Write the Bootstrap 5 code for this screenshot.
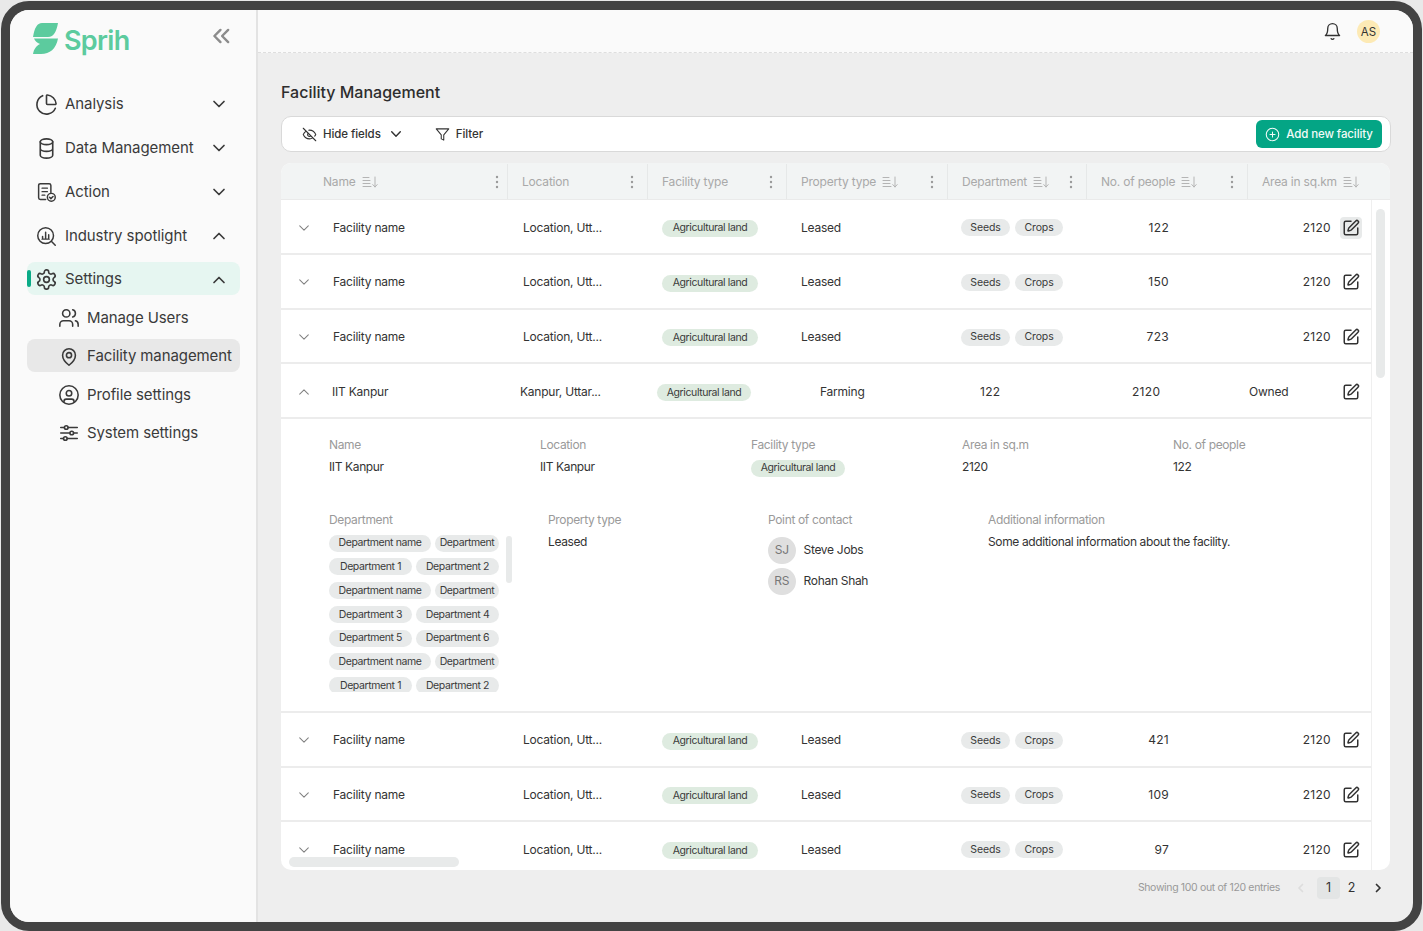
<!DOCTYPE html>
<html lang="en">
<head>
<meta charset="utf-8">
<title>Facility Management</title>
<link href="https://cdn.jsdelivr.net/npm/bootstrap@5.3.0/dist/css/bootstrap.min.css" rel="stylesheet">
<style>
html,body{height:100%;margin:0}
body{background:#e9e9e9;padding:1px 1px 0;font-family:Inter,"Liberation Sans",sans-serif;color:#333;overflow:hidden}
.ico{fill:none;stroke:currentColor;stroke-width:1.7;stroke-linecap:round;stroke-linejoin:round;flex:none}
.device{height:930px;border:9px solid #434343;border-radius:28px;overflow:hidden;background:#eee}
.side{width:248px;flex:none;background:#fafafa;border-right:2px solid #e3e3e3}
.brand{height:77.5px;padding:13px 0 0 23px;position:relative}
.brand-name{color:#5ccb9e;font-size:27px;font-weight:600;letter-spacing:-.7px;line-height:32px;margin:2px 0 0 6px}
.collapse-btn{color:#8c8c8c;margin:2px 0 0 80px;stroke-width:2.2}
.side-item{height:33px;margin:0 16px 11px 17px;padding:0 14px 0 8px;border-radius:8px;font-size:15px;gap:7px;color:#3a3a3a;position:relative;text-decoration:none;letter-spacing:-.08px}
.side-item .lbl{flex:1}
.side-item .ic-sm{margin:0 1px}
.side-item.pre-on{margin-bottom:9.5px}
.side-item.on{background:#e6f6f1;margin-bottom:6.5px;padding-top:2px}
.side-item.on::before{content:"";position:absolute;left:0;top:8px;width:4px;height:17px;border-radius:2px;background:#0bab87}
.sub-item{height:33px;margin:0 16px 4.5px 17px;padding:0 0 0 31px;border-radius:8px;font-size:15px;gap:7px;color:#3a3a3a;text-decoration:none;letter-spacing:-.1px}
.sub-item.cur{background:#e8e8e8;margin-bottom:6.4px;padding-top:2px}
.sub-item.tail{margin-bottom:5px}
.topbar{height:43px;flex:none;background:#fafafa;border-bottom:1.5px dashed #dedede;padding-right:33px;gap:15px}
.ava{width:23px;height:23px;border-radius:50%;background:#fdeab5;font-size:11.5px;color:#333;margin-top:1px;padding-top:2px}
.page-body{padding:27px 22px 0 23px}
.page-title{font-size:16px;font-weight:500;line-height:24px;margin:0 0 12px;color:#2d2d2d}
.toolbar{height:36px;background:#fff;border:1px solid #d9d9d9;border-radius:10px;padding:0 8px 0 20px}
.tool{font-size:11.5px;font-weight:500;color:#333;gap:6px;letter-spacing:-.08px}
.tool span{padding-top:1px}
.tool-hide .ico:last-child{margin-left:3px}
.tool-filter{margin:0 auto 0 33px}
.add-btn{background:#04a585;color:#f2fbf8;border:0;border-radius:6px;height:28px;width:126px;font-size:11.5px;font-weight:500;gap:6px;padding:1px 0 0;letter-spacing:-.1px}
.grid-wrap{height:707px;margin:11px 1px 0 0;background:#fff;border-radius:10px;overflow:hidden;position:relative}
.grid-head{height:37px;background:#f2f4f4;border-bottom:1px solid #eaeaea;font-size:12px;color:#a9a9a9;letter-spacing:-.2px;padding-top:1px}
.hc{height:100%;padding-left:14px;border-right:1px solid #e6e8e8;gap:6px}
.hc .ico{stroke-width:1;color:#b4b4b4}
.hc .kb{margin-left:auto;margin-right:13px;color:#9a9a9a}
.hc1{width:227px;padding-left:42px}.hc1 .kb{margin-right:8px}
.hc2{width:140px}.hc3{width:139px}.hc4{width:161px}.hc5{width:139px}.hc6{width:161px}.hc7{width:142px;border-right:0}
.grid-body{width:1091px;border-right:1px solid #efefef;height:670px;overflow:hidden;font-size:12px;letter-spacing:-.22px;color:#333}
.gr{height:54.75px;border-bottom:2px solid #ececec;padding-top:2.5px}
.tg{width:52px;padding-left:17px;color:#808080}
.tg .ico{stroke-width:1.2}
.c-name{width:190px}.c-loc{width:139px}.c-type{width:139px}.c-prop{width:160px}.c-dept{width:127px;gap:5px}.c-ppl{width:81px;text-align:right}.c-area{width:162px;text-align:right}
.c-edit{width:40px;padding-left:9px}
.c-ppl,.c-area,.x-ppl,.x-area{letter-spacing:.3px}
.edit-box{width:22px;height:22px;border-radius:4px;color:#333}
.edit-box .ico{stroke-width:2}
.edit-box.hl{background:#e8eaea}
.x-tg{width:51px}.x-name{width:188px}.x-loc{width:137px}.x-type{width:163px}.x-prop{width:160px}.x-ppl{width:152px}.x-area{width:117px}.x-own{width:82px}
.chip{display:inline-flex;align-items:center;justify-content:center;height:17px;border-radius:9px;font-size:10.5px;letter-spacing:-.4px;white-space:nowrap;color:#3a3a3a;background:#e8eaea}
.chip.land{background:#deebe0;width:96px}
.x-type .chip.land{width:94px}
.val .chip.land{width:94px}
.chip.s{width:49px;letter-spacing:-.1px}.chip.cr{width:48px;letter-spacing:-.1px}
.detail{height:293.75px;border-bottom:2px solid #ececec;padding:18px 0 0 48px;position:relative}
.lab{font-size:12px;color:#9a9a9a;line-height:16px;letter-spacing:-.35px}
.val{font-size:12px;color:#333;line-height:16px;margin-top:6px;letter-spacing:-.37px}
.d1{width:211px;flex:none}
.d-top{height:67px;margin-bottom:7.5px}
.dept-col{width:219px;flex:none}.prop-col{width:220px;flex:none}.poc-col{width:220px;flex:none}
.dept-scroll{height:157px;width:170px;overflow:hidden;margin-top:7px;gap:6.8px}
.dept-scroll .chip{flex:none}
.dr{gap:4px;flex:none}
.chip.l{width:102px}.chip.m{width:64px}.chip.e{width:83px}
.d-thumb{position:absolute;left:225px;top:117px;width:6px;height:47px;border-radius:3px;background:#e8eaea}
.per{gap:8px;font-size:12px;letter-spacing:-.3px;margin-top:3.500px}
.per-first{margin-top:9px}
.per-ava{width:27.500px;height:27.500px;border-radius:50%;background:#dfdfdf;color:#777;font-size:12px}
.v-track{position:absolute;right:5px;top:46px;width:9px;height:169px;border-radius:5px;background:#e8eaea}
.h-track{position:absolute;left:8px;bottom:3px;width:170px;height:10px;border-radius:5px;background:#e8eaea}
.pager{height:36px;font-size:10.5px;letter-spacing:-.35px;color:#999;padding-right:1px}
.pg{font-size:12.5px;letter-spacing:0;color:#333;width:23px;height:22px;border-radius:4px}
.pg.cur{background:#e3e5e5}
.pg-prev{margin:0 12px 0 17px;color:#ddd}
.pg-next{margin:0 8px 0 11px;color:#333}
</style>
</head>
<body>
<svg width="0" height="0" class="position-absolute">
<defs>
<symbol id="down" viewBox="0 0 14 14"><path d="M2 4.500l5 5 5-5"/></symbol>
<symbol id="up" viewBox="0 0 14 14"><path d="M2 9.500l5-5 5 5"/></symbol>
<symbol id="edit" viewBox="0 0 24 24"><path d="M12 3H5a2 2 0 0 0-2 2v14a2 2 0 0 0 2 2h14a2 2 0 0 0 2-2v-7"/><path d="M18.375 2.625a1 1 0 0 1 3 3l-9.013 9.014a2 2 0 0 1-.853.505l-2.873.84a.5.5 0 0 1-.62-.62l.84-2.873a2 2 0 0 1 .506-.852z"/></symbol>
<symbol id="sort" viewBox="0 0 16 12"><path d="M1 1.500h6M1 4.500h7M1 7.500h7M1 10.500h8M13 1v10M10.800 8.600L13 11l2.200-2.400"/></symbol>
<symbol id="kebab" viewBox="0 0 4 14"><circle cx="2" cy="2" r="1.200" fill="currentColor" stroke="none"/><circle cx="2" cy="7" r="1.200" fill="currentColor" stroke="none"/><circle cx="2" cy="12" r="1.200" fill="currentColor" stroke="none"/></symbol>
</defs>
</svg>
<div class="device d-flex">
  <aside class="side">
    <div class="brand d-flex align-items-start">
      <svg width="25" height="31" viewBox="0 0 25 31" aria-hidden="true"><path fill="#5ccb9e" d="M25 0H9C4 0 1.500 5 0 14h15c6 0 8.500-6 10-14z"/><path fill="#5ccb9e" d="M1 15.500h24C23 26 17 31 8 31H0c1-5 3-8 7-10-3-1-5-3-6-5.500z"/></svg>
      <span class="brand-name">Sprih</span>
      <svg class="ico collapse-btn" width="22" height="22" viewBox="0 0 20 20"><path d="M9.500 4.500L4 10l5.500 5.500M16.500 4.500L11 10l5.500 5.500"/></svg>
    </div>
    <nav class="d-flex flex-column">
      <a class="side-item d-flex align-items-center"><svg class="ico" width="23" height="23" viewBox="0 0 24 24"><path d="M21 12c.552 0 1.005-.449.95-.998a10 10 0 0 0-8.953-8.951c-.55-.055-.998.398-.998.95v8a1 1 0 0 0 1 1z"/><path d="M21.210 15.890A10 10 0 1 1 8 2.830"/></svg><span class="lbl">Analysis</span><svg class="ico" width="14" height="14"><use href="#down"/></svg></a>
      <a class="side-item d-flex align-items-center"><svg class="ico" width="23" height="23" viewBox="0 0 24 24"><ellipse cx="12" cy="5" rx="6.500" ry="3"/><path d="M5.500 5v14a6.500 3 0 0 0 13 0V5M5.500 12a6.500 3 0 0 0 13 0"/></svg><span class="lbl">Data Management</span><svg class="ico" width="14" height="14"><use href="#down"/></svg></a>
      <a class="side-item d-flex align-items-center"><svg class="ico ic-sm" width="21" height="21" viewBox="0 0 24 24"><path d="M11 20H5a2 2 0 0 1-2-2V4a2 2 0 0 1 2-2h10a2 2 0 0 1 2 2v8M7 7h6M7 11h6M7 15h3"/><circle cx="17.500" cy="17.500" r="4.500"/><path d="M15.500 17.500l1.500 1.500 2.500-2.500"/></svg><span class="lbl">Action</span><svg class="ico" width="14" height="14"><use href="#down"/></svg></a>
      <a class="side-item pre-on d-flex align-items-center"><svg class="ico ic-sm" width="21" height="21" viewBox="0 0 24 24"><circle cx="11" cy="11" r="9"/><path d="M17.500 17.500L22 22M7.500 14v-2M11 14V7M14.500 14v-4M7 15h8"/></svg><span class="lbl">Industry spotlight</span><svg class="ico" width="14" height="14"><use href="#up"/></svg></a>
      <a class="side-item on d-flex align-items-center"><svg class="ico" width="23" height="23" viewBox="0 0 24 24"><path d="M12.220 2h-.44a2 2 0 0 0-2 2v.18a2 2 0 0 1-1 1.730l-.43.25a2 2 0 0 1-2 0l-.15-.08a2 2 0 0 0-2.730.73l-.22.38a2 2 0 0 0 .73 2.730l.15.1a2 2 0 0 1 1 1.720v.51a2 2 0 0 1-1 1.740l-.15.09a2 2 0 0 0-.73 2.730l.22.38a2 2 0 0 0 2.730.73l.15-.08a2 2 0 0 1 2 0l.43.25a2 2 0 0 1 1 1.730V20a2 2 0 0 0 2 2h.44a2 2 0 0 0 2-2v-.18a2 2 0 0 1 1-1.730l.43-.25a2 2 0 0 1 2 0l.15.08a2 2 0 0 0 2.730-.73l.22-.39a2 2 0 0 0-.73-2.730l-.15-.08a2 2 0 0 1-1-1.740v-.5a2 2 0 0 1 1-1.740l.15-.09a2 2 0 0 0 .73-2.730l-.22-.38a2 2 0 0 0-2.730-.73l-.15.08a2 2 0 0 1-2 0l-.43-.25a2 2 0 0 1-1-1.730V4a2 2 0 0 0-2-2z"/><circle cx="12" cy="12" r="3"/></svg><span class="lbl">Settings</span><svg class="ico" width="14" height="14"><use href="#up"/></svg></a>
      <a class="sub-item d-flex align-items-center"><svg class="ico" width="22" height="22" viewBox="0 0 24 24"><path d="M16 21v-2a4 4 0 0 0-4-4H6a4 4 0 0 0-4 4v2"/><circle cx="9" cy="7" r="4"/><path d="M22 21v-2a4 4 0 0 0-3-3.870M16 3.130a4 4 0 0 1 0 7.750"/></svg><span>Manage Users</span></a>
      <a class="sub-item cur d-flex align-items-center"><svg class="ico" width="22" height="22" viewBox="0 0 24 24"><path d="M19 10c0 5.500-7 11-7 11s-7-5.500-7-11a7 7 0 0 1 14 0Z"/><circle cx="12" cy="10" r="2.800"/></svg><span>Facility management</span></a>
      <a class="sub-item tail d-flex align-items-center"><svg class="ico" width="22" height="22" viewBox="0 0 24 24"><circle cx="12" cy="12" r="10"/><circle cx="12" cy="10" r="3"/><path d="M6.500 20v-1a2.500 2.500 0 0 1 2.500-2.500h6a2.500 2.500 0 0 1 2.500 2.500v1"/></svg><span>Profile settings</span></a>
      <a class="sub-item d-flex align-items-center"><svg class="ico" width="22" height="22" viewBox="0 0 24 24"><path d="M3 6h4M11 6h10M3 12h10M17 12h4M3 18h3M10 18h11"/><circle cx="9" cy="6" r="2"/><circle cx="15" cy="12" r="2"/><circle cx="8" cy="18" r="2"/></svg><span>System settings</span></a>
    </nav>
  </aside>
  <main class="flex-grow-1 d-flex flex-column">
    <div class="topbar d-flex align-items-center justify-content-end">
      <svg class="ico" width="19" height="19" viewBox="0 0 24 24"><path d="M6 8a6 6 0 0 1 12 0c0 7 3 9 3 9H3s3-2 3-9"/><path d="M10.300 21a1.940 1.940 0 0 0 3.400 0"/></svg>
      <div class="ava d-flex align-items-center justify-content-center">AS</div>
    </div>
    <div class="page-body">
      <h1 class="page-title">Facility Management</h1>
      <div class="toolbar d-flex align-items-center">
        <div class="tool tool-hide d-flex align-items-center"><svg class="ico" width="15" height="15" viewBox="0 0 24 24"><path d="M9.880 9.880a3 3 0 1 0 4.240 4.240M10.730 5.080A10.430 10.430 0 0 1 12 5c7 0 10 7 10 7a13.160 13.160 0 0 1-1.670 2.680M6.610 6.610A13.526 13.526 0 0 0 2 12s3 7 10 7a9.740 9.740 0 0 0 5.390-1.610M2 2l20 20"/></svg><span>Hide fields</span><svg class="ico" width="12" height="12"><use href="#down"/></svg></div>
        <div class="tool tool-filter d-flex align-items-center"><svg class="ico" width="15" height="15" viewBox="0 0 24 24"><path d="M22 3H2l8 9.460V19l4 2v-8.540L22 3z"/></svg><span>Filter</span></div>
        <button class="add-btn d-flex align-items-center justify-content-center" type="button"><svg class="ico" width="15" height="15" viewBox="0 0 24 24"><circle cx="12" cy="12" r="10"/><path d="M12 8v8M8 12h8"/></svg>Add new facility</button>
      </div>
      <div class="grid-wrap">
        <div class="grid-head d-flex">
          <div class="hc hc1 d-flex align-items-center"><span>Name</span><svg class="ico" width="16" height="12"><use href="#sort"/></svg><svg class="kb" width="4" height="14"><use href="#kebab"/></svg></div>
          <div class="hc hc2 d-flex align-items-center"><span>Location</span><svg class="kb" width="4" height="14"><use href="#kebab"/></svg></div>
          <div class="hc hc3 d-flex align-items-center"><span>Facility type</span><svg class="kb" width="4" height="14"><use href="#kebab"/></svg></div>
          <div class="hc hc4 d-flex align-items-center"><span>Property type</span><svg class="ico" width="16" height="12"><use href="#sort"/></svg><svg class="kb" width="4" height="14"><use href="#kebab"/></svg></div>
          <div class="hc hc5 d-flex align-items-center"><span>Department</span><svg class="ico" width="16" height="12"><use href="#sort"/></svg><svg class="kb" width="4" height="14"><use href="#kebab"/></svg></div>
          <div class="hc hc6 d-flex align-items-center"><span>No. of people</span><svg class="ico" width="16" height="12"><use href="#sort"/></svg><svg class="kb" width="4" height="14"><use href="#kebab"/></svg></div>
          <div class="hc hc7 d-flex align-items-center"><span>Area in sq.km</span><svg class="ico" width="16" height="12"><use href="#sort"/></svg></div>
        </div>
        <div class="grid-body">
          <div class="gr d-flex align-items-center"><div class="tg d-flex"><svg class="ico" width="12" height="12"><use href="#down"/></svg></div><div class="c-name">Facility name</div><div class="c-loc">Location, Utt...</div><div class="c-type"><span class="chip land">Agricultural land</span></div><div class="c-prop">Leased</div><div class="c-dept d-flex"><span class="chip s">Seeds</span><span class="chip cr">Crops</span></div><div class="c-ppl">122</div><div class="c-area">2120</div><div class="c-edit"><div class="edit-box hl d-flex align-items-center justify-content-center"><svg class="ico" width="18" height="18"><use href="#edit"/></svg></div></div></div>
          <div class="gr d-flex align-items-center"><div class="tg d-flex"><svg class="ico" width="12" height="12"><use href="#down"/></svg></div><div class="c-name">Facility name</div><div class="c-loc">Location, Utt...</div><div class="c-type"><span class="chip land">Agricultural land</span></div><div class="c-prop">Leased</div><div class="c-dept d-flex"><span class="chip s">Seeds</span><span class="chip cr">Crops</span></div><div class="c-ppl">150</div><div class="c-area">2120</div><div class="c-edit"><div class="edit-box d-flex align-items-center justify-content-center"><svg class="ico" width="18" height="18"><use href="#edit"/></svg></div></div></div>
          <div class="gr d-flex align-items-center"><div class="tg d-flex"><svg class="ico" width="12" height="12"><use href="#down"/></svg></div><div class="c-name">Facility name</div><div class="c-loc">Location, Utt...</div><div class="c-type"><span class="chip land">Agricultural land</span></div><div class="c-prop">Leased</div><div class="c-dept d-flex"><span class="chip s">Seeds</span><span class="chip cr">Crops</span></div><div class="c-ppl">723</div><div class="c-area">2120</div><div class="c-edit"><div class="edit-box d-flex align-items-center justify-content-center"><svg class="ico" width="18" height="18"><use href="#edit"/></svg></div></div></div>
          <div class="gr d-flex align-items-center"><div class="tg x-tg d-flex"><svg class="ico" width="12" height="12"><use href="#up"/></svg></div><div class="x-name">IIT Kanpur</div><div class="x-loc">Kanpur, Uttar...</div><div class="x-type"><span class="chip land">Agricultural land</span></div><div class="x-prop">Farming</div><div class="x-ppl">122</div><div class="x-area">2120</div><div class="x-own">Owned</div><div class="c-edit"><div class="edit-box d-flex align-items-center justify-content-center"><svg class="ico" width="18" height="18"><use href="#edit"/></svg></div></div></div>
          <div class="detail">
            <div class="d-top d-flex">
              <div class="d1"><div class="lab">Name</div><div class="val">IIT Kanpur</div></div>
              <div class="d1"><div class="lab">Location</div><div class="val">IIT Kanpur</div></div>
              <div class="d1"><div class="lab">Facility type</div><div class="val"><span class="chip land">Agricultural land</span></div></div>
              <div class="d1"><div class="lab">Area in sq.m</div><div class="val">2120</div></div>
              <div class="d1"><div class="lab">No. of people</div><div class="val">122</div></div>
            </div>
            <div class="d-flex">
              <div class="dept-col">
                <div class="lab">Department</div>
                <div class="dept-scroll d-flex flex-column">
                  <div class="dr d-flex"><span class="chip l">Department name</span><span class="chip m">Department</span></div>
                  <div class="dr d-flex"><span class="chip e">Department 1</span><span class="chip e">Department 2</span></div>
                  <div class="dr d-flex"><span class="chip l">Department name</span><span class="chip m">Department</span></div>
                  <div class="dr d-flex"><span class="chip e">Department 3</span><span class="chip e">Department 4</span></div>
                  <div class="dr d-flex"><span class="chip e">Department 5</span><span class="chip e">Department 6</span></div>
                  <div class="dr d-flex"><span class="chip l">Department name</span><span class="chip m">Department</span></div>
                  <div class="dr d-flex"><span class="chip e">Department 1</span><span class="chip e">Department 2</span></div>
                </div>
              </div>
              <div class="prop-col"><div class="lab">Property type</div><div class="val">Leased</div></div>
              <div class="poc-col">
                <div class="lab">Point of contact</div>
                <div class="per per-first d-flex align-items-center"><div class="per-ava d-flex align-items-center justify-content-center">SJ</div><span>Steve Jobs</span></div>
                <div class="per d-flex align-items-center"><div class="per-ava d-flex align-items-center justify-content-center">RS</div><span>Rohan Shah</span></div>
              </div>
              <div><div class="lab">Additional information</div><div class="val">Some additional information about the facility.</div></div>
            </div>
            <div class="d-thumb"></div>
          </div>
          <div class="gr d-flex align-items-center"><div class="tg d-flex"><svg class="ico" width="12" height="12"><use href="#down"/></svg></div><div class="c-name">Facility name</div><div class="c-loc">Location, Utt...</div><div class="c-type"><span class="chip land">Agricultural land</span></div><div class="c-prop">Leased</div><div class="c-dept d-flex"><span class="chip s">Seeds</span><span class="chip cr">Crops</span></div><div class="c-ppl">421</div><div class="c-area">2120</div><div class="c-edit"><div class="edit-box d-flex align-items-center justify-content-center"><svg class="ico" width="18" height="18"><use href="#edit"/></svg></div></div></div>
          <div class="gr d-flex align-items-center"><div class="tg d-flex"><svg class="ico" width="12" height="12"><use href="#down"/></svg></div><div class="c-name">Facility name</div><div class="c-loc">Location, Utt...</div><div class="c-type"><span class="chip land">Agricultural land</span></div><div class="c-prop">Leased</div><div class="c-dept d-flex"><span class="chip s">Seeds</span><span class="chip cr">Crops</span></div><div class="c-ppl">109</div><div class="c-area">2120</div><div class="c-edit"><div class="edit-box d-flex align-items-center justify-content-center"><svg class="ico" width="18" height="18"><use href="#edit"/></svg></div></div></div>
          <div class="gr d-flex align-items-center"><div class="tg d-flex"><svg class="ico" width="12" height="12"><use href="#down"/></svg></div><div class="c-name">Facility name</div><div class="c-loc">Location, Utt...</div><div class="c-type"><span class="chip land">Agricultural land</span></div><div class="c-prop">Leased</div><div class="c-dept d-flex"><span class="chip s">Seeds</span><span class="chip cr">Crops</span></div><div class="c-ppl">97</div><div class="c-area">2120</div><div class="c-edit"><div class="edit-box d-flex align-items-center justify-content-center"><svg class="ico" width="18" height="18"><use href="#edit"/></svg></div></div></div>
        </div>
        <div class="v-track"></div>
        <div class="h-track"></div>
      </div>
      <div class="pager d-flex align-items-center justify-content-end">
        <span>Showing 100 out of 120 entries</span>
        <svg class="ico pg-prev" width="8" height="10" viewBox="0 0 8 10"><path d="M5.500 1.500L2 5l3.500 3.500"/></svg>
        <div class="pg cur d-flex align-items-center justify-content-center">1</div>
        <div class="pg d-flex align-items-center justify-content-center">2</div>
        <svg class="ico pg-next" width="8" height="10" viewBox="0 0 8 10"><path d="M2.500 1.500L6 5 2.500 8.500"/></svg>
      </div>
    </div>
  </main>
</div>
<script src="https://cdn.jsdelivr.net/npm/bootstrap@5.3.0/dist/js/bootstrap.bundle.min.js"></script>
</body>
</html>
